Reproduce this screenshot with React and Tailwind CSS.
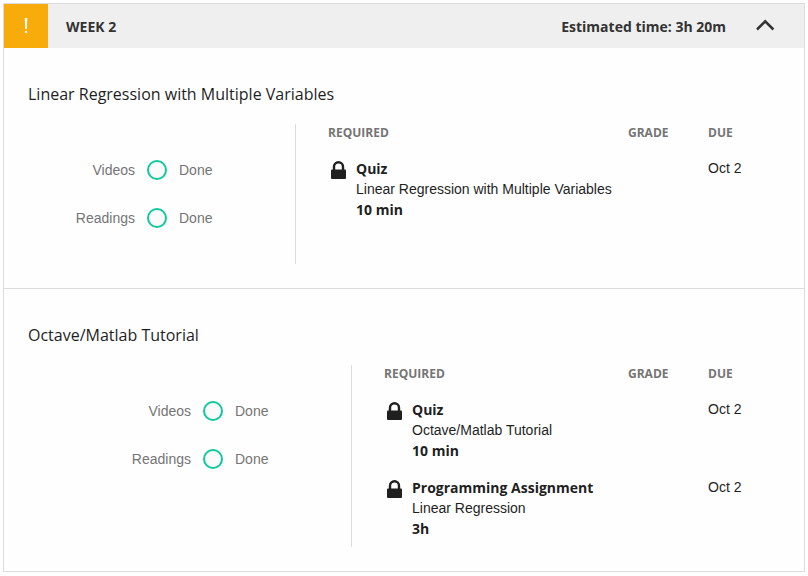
const Lock = () => (
  <svg className="mt-[3px] h-[18px] w-4 shrink-0" viewBox="0 0 16 18">
    <path d="M4 9.5V5.7a4.5 4.5 0 0 1 9 0v3.8" fill="none" stroke="#1f1f1f" strokeWidth="2.4" />
    <rect x="1" y="8.5" width="15" height="9.5" rx="1" fill="#1f1f1f" />
  </svg>
);

const Progress = ({ label }) => (
  <div className="flex h-5 items-center text-sm text-[#757575]">
    <span className="flex-1 text-right">{label}</span>
    <span className="mx-3 h-5 w-5 rounded-full border-2 border-[#10ca9e] bg-[#fafafa]" />
    <span className="w-[116px]">Done</span>
  </div>
);

const Item = ({ type, name, time, due }) => (
  <div className="flex h-[78px] text-sm leading-5 text-[#1f1f1f]">
    <div className="flex w-7 pl-0.5"><Lock /></div>
    <div className="flex-1 whitespace-nowrap">
      <div className="h-5 pt-px font-['Open_Sans',sans-serif] font-bold leading-5">{type}</div>
      <div className="h-[21px] pt-px leading-5">{name}</div>
      <div className="h-5 pt-px font-['Open_Sans',sans-serif] font-bold leading-5">{time}</div>
    </div>
    <div className="w-[72px]">{due}</div>
  </div>
);

const Module = ({ title, narrow, items }) => (
  <section className="pl-6">
    <h2 className="pt-[34px] font-['Open_Sans',sans-serif] text-base leading-6 text-[#1f1f1f]">{title}</h2>
    <div className="mt-[18px] flex">
      <div className={`${narrow ? "h-[140px] w-[268px]" : "h-[182px] w-[324px]"} flex shrink-0 flex-col gap-7 border-r border-[#dcdcdc] pt-9`}>
        <Progress label="Videos" />
        <Progress label="Readings" />
      </div>
      <div className="flex-1 pl-8">
        <div className="flex h-[34px] pt-px font-['Open_Sans',sans-serif] text-xs font-bold leading-4 text-[#757575]">
          <span className="flex-1">REQUIRED</span>
          <span className="w-20">GRADE</span>
          <span className="w-24">DUE</span>
        </div>
        <div className="pr-6">
          {items.map((item) => <Item key={item.type} {...item} />)}
        </div>
      </div>
    </div>
  </section>
);

export default function App() {
  return (
    <main className="h-[576px] overflow-hidden bg-[#fefefe] pl-[3px] pt-[3px] font-['Liberation_Sans',Arial,sans-serif]">
      <div className="h-[569px] w-[802px] border border-[#dcdcdc]">
        <header className="flex h-11 items-center bg-[#efefef] font-['Open_Sans',sans-serif] text-sm font-bold text-[#333]">
          <div className="flex h-11 w-11 items-center justify-center bg-[#f8ac0c]">
            <svg className="h-4 w-1" viewBox="0 0 4 16" fill="#fff"><path d="M.7 0h2.6l-.5 11H1.2zM1 13h2v2H1z" /></svg>
          </div>
          <span className="flex-1 pl-[18px] pt-0.5">WEEK 2</span>
          <span className="pt-0.5">Estimated time: 3h 20m</span>
          <svg className="mb-[3px] ml-[30px] mr-[29px] h-3 w-[19px]" viewBox="0 0 19 12" fill="none" stroke="#333" strokeWidth="2.5"><path d="m1 10.5 8.2-8.2 8.2 8.2" /></svg>
        </header>
        <div className="h-[241px] border-b border-[#dcdcdc]">
          <Module title="Linear Regression with Multiple Variables" narrow items={[{ type: "Quiz", name: "Linear Regression with Multiple Variables", time: "10 min", due: "Oct 2" }]} />
        </div>
        <Module title="Octave/Matlab Tutorial" items={[{ type: "Quiz", name: "Octave/Matlab Tutorial", time: "10 min", due: "Oct 2" }, { type: "Programming Assignment", name: "Linear Regression", time: "3h", due: "Oct 2" }]} />
      </div>
    </main>
  );
}
